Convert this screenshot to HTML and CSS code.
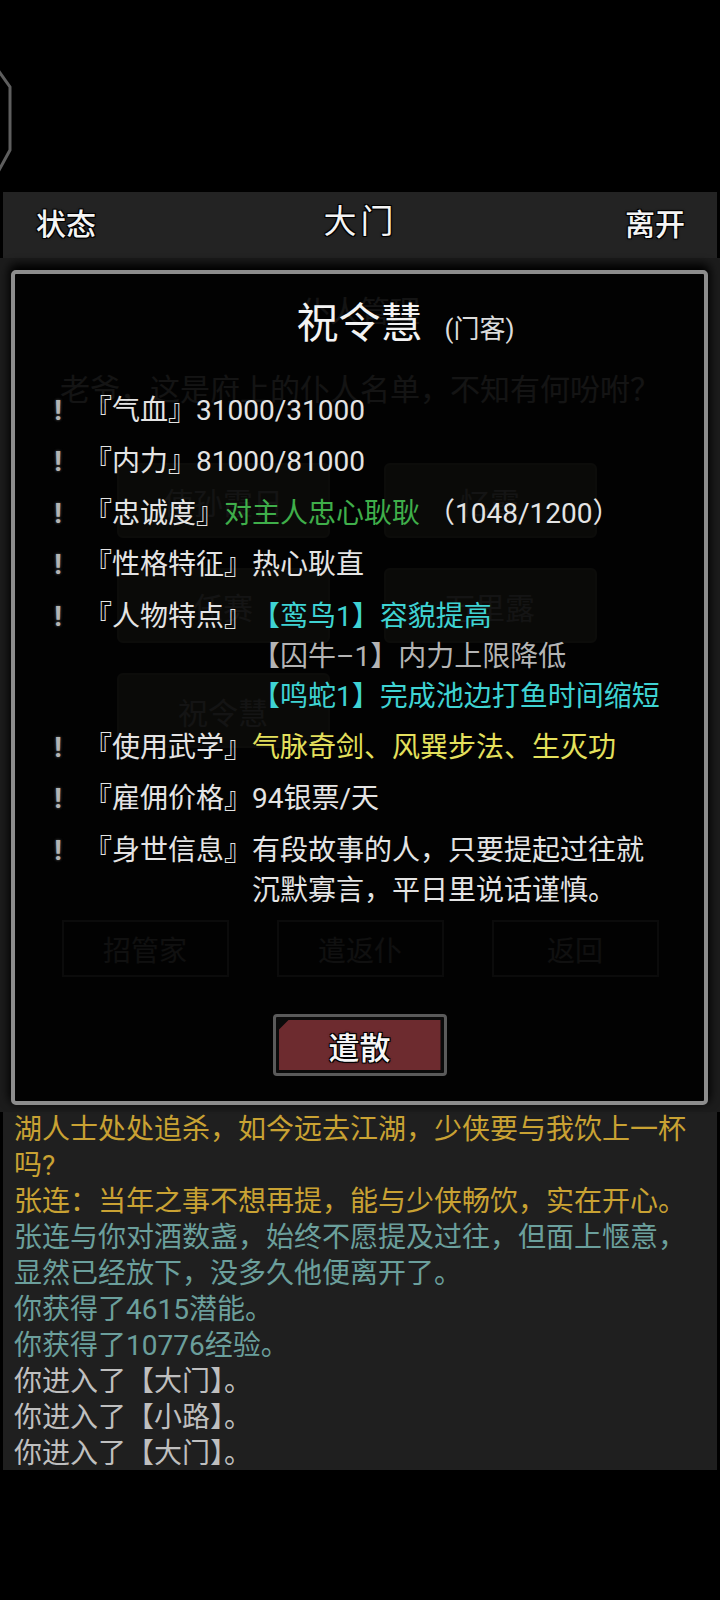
FILE: index.html
```html
<!DOCTYPE html>
<html lang="zh-CN">
<head>
<meta charset="utf-8">
<title>大门</title>
<link rel="stylesheet" href="styles.css">
</head>
<body>
<div class="page">
  <div class="top">
    <svg class="edge-hex" width="14" height="106" viewBox="0 0 14 106"><path d="M-2 2 L10 19 L10 82 L-2 104" fill="none" stroke="#5e5e5e" stroke-width="3"/></svg>
  </div>
  <header class="bar">
    <span class="bar-btn">状态</span>
    <span class="bar-title">大门</span>
    <span class="bar-btn">离开</span>
  </header>
  <main class="scene">
    <div class="scene-title">仆人管理</div>
    <div class="scene-intro">老爷，这是府上的仆人名单，不知有何吩咐？</div>
    <div class="servant-grid">
      <div class="servant">使孙霞日</div>
      <div class="servant">忆霞</div>
      <div class="servant">任赛</div>
      <div class="servant">万里露</div>
      <div class="servant">祝令慧</div>
    </div>
    <div class="scene-actions">
      <div class="scene-act">招管家</div>
      <div class="scene-act">遣返仆</div>
      <div class="scene-act">返回</div>
    </div>

    <section class="dialog">
      <div class="dlg-title">
        <span class="dlg-name">祝令慧</span>
        <span class="dlg-role">(门客)</span>
      </div>
      <div class="rows">
        <div class="row"><span class="mark">!</span><span class="label">『气血』</span><span class="val">31000/31000</span></div>
        <div class="row"><span class="mark">!</span><span class="label">『内力』</span><span class="val">81000/81000</span></div>
        <div class="row"><span class="mark">!</span><span class="label">『忠诚度』</span><span class="val"><span class="green">对主人忠心耿耿</span> （1048/1200）</span></div>
        <div class="row"><span class="mark">!</span><span class="label">『性格特征』</span><span class="val">热心耿直</span></div>
        <div class="row"><span class="mark">!</span><span class="label">『人物特点』</span><span class="val"><span class="line cyan">【鸾鸟1】容貌提高</span><span class="line grey">【囚牛–1】内力上限降低</span><span class="line cyan">【鸣蛇1】完成池边打鱼时间缩短</span></span></div>
        <div class="row"><span class="mark">!</span><span class="label">『使用武学』</span><span class="val yellow">气脉奇剑、风巽步法、生灭功</span></div>
        <div class="row"><span class="mark">!</span><span class="label">『雇佣价格』</span><span class="val">94银票/天</span></div>
        <div class="row"><span class="mark">!</span><span class="label">『身世信息』</span><span class="val">有段故事的人，只要提起过往就沉默寡言，平日里说话谨慎。</span></div>
      </div>
      <div class="dismiss"><div class="dismiss-face">遣散</div></div>
    </section>
  </main>
  <section class="log">
    <p class="gold">湖人士处处追杀，如今远去江湖，少侠要与我饮上一杯吗?</p>
    <p class="gold">张连：当年之事不想再提，能与少侠畅饮，实在开心。</p>
    <p class="teal">张连与你对酒数盏，始终不愿提及过往，但面上惬意，显然已经放下，没多久他便离开了。</p>
    <p class="teal">你获得了4615潜能。</p>
    <p class="teal">你获得了10776经验。</p>
    <p class="plain">你进入了【大门】。</p>
    <p class="plain">你进入了【小路】。</p>
    <p class="plain">你进入了【大门】。</p>
  </section>
</div>
</body>
</html>
```

FILE: styles.css
```css
* { box-sizing: border-box; }
html, body {
  margin: 0;
  padding: 0;
  background: #000;
}
body {
  width: 720px;
  height: 1600px;
  font-family: Roboto, "Noto Sans CJK SC", "Noto Sans", sans-serif;
  color: #e2e2e2;
  overflow: hidden;
}
.page {
  display: flex;
  flex-direction: column;
  width: 720px;
  height: 1600px;
}
.top {
  height: 192px;
  padding-top: 68px;
}
.edge-hex { display: block; }

.bar {
  height: 66px;
  margin: 0 3px;
  background: #232323;
  display: flex;
  align-items: center;
  justify-content: space-between;
  padding: 0 32px 0 33px;
}
.bar-btn, .bar-title {
  font-size: 30px;
  line-height: 36px;
  color: #f4f4f4;
  text-shadow: 1px 1px 0 #000, -1px -1px 0 #000, 1px -1px 0 #000, -1px 1px 0 #000, 0 0 3px #000;
}
.bar-btn { font-weight: 500; }
.bar-title {
  font-size: 33px;
  font-weight: 400;
  letter-spacing: 4px;
  margin-top: -6px;
}

.scene {
  position: relative;
  height: 854px;
  background: #1c1c1c;
  display: flex;
  flex-direction: column;
  align-items: center;
}
.scene-title {
  margin-top: 36px;
  font-size: 30px;
  line-height: 36px;
  color: #c8c8c8;
}
.scene-intro {
  margin-top: 42px;
  font-size: 30px;
  line-height: 36px;
  color: #c8c8c8;
}
.servant-grid {
  margin-top: 55px;
  display: grid;
  grid-template-columns: 213px 213px;
  column-gap: 54px;
  row-gap: 30px;
  margin-left: -7px;
}
.servant {
  height: 75px;
  background: #6a6a50;
  border: 2px solid #7a7a6a;
  border-radius: 6px;
  display: flex;
  align-items: center;
  justify-content: center;
  font-size: 30px;
  color: #c8c8c8;
}
.scene-actions {
  margin-top: 172px;
  display: flex;
  gap: 48px;
}
.scene-act {
  width: 167px;
  height: 57px;
  border: 2px solid #707070;
  display: flex;
  align-items: center;
  justify-content: center;
  font-size: 28px;
  color: #a0a0a0;
}

.dialog {
  position: absolute;
  left: 11px;
  top: 12px;
  width: 697px;
  height: 835px;
  border: 4px solid #8d8d8d;
  border-radius: 5px;
  background: rgba(0, 0, 0, 0.9);
  box-shadow: 0 -4px 10px 2px #000;
  display: flex;
  flex-direction: column;
  padding: 25px 0;
}
.dlg-title {
  display: grid;
  grid-template-columns: 1fr auto 1fr;
  align-items: baseline;
  line-height: 50px;
}
.dlg-name {
  grid-column: 2;
  font-size: 42px;
  color: #f3f3f3;
}
.dlg-role {
  grid-column: 3;
  margin-left: 22px;
  font-size: 26px;
  color: #dcdcdc;
}
.rows {
  margin-top: 37px;
  padding: 0 39px 0 30px;
  display: flex;
  flex-direction: column;
  gap: 11.4px;
  font-size: 28px;
  line-height: 40px;
}
.row {
  display: flex;
  align-items: flex-start;
}
.mark {
  width: 26px;
  flex: none;
  text-align: center;
  font-weight: 700;
  color: #b4b4b4;
  text-shadow: 0 0 3px #666;
}
.label {
  margin-left: 13px;
  flex: none;
  white-space: nowrap;
  color: #e4e4e4;
}
.val {
  flex: 1;
  color: #e4e4e4;
}
.line { display: block; }
.green { color: #3fae4a; }
.cyan { color: #3fd3d3; }
.grey { color: #b4b4b4; }
.yellow { color: #e4e05c; }

.dismiss {
  margin-top: auto;
  align-self: center;
  width: 174px;
  height: 62px;
  border: 3px solid #5a5a5a;
  border-radius: 4px;
  background: #0b0b0b;
  padding: 3px;
}
.dismiss-face {
  height: 100%;
  background: #6d2b2f;
  clip-path: polygon(10px 0, 100% 0, 100% 100%, 0 100%, 0 10px);
  display: flex;
  align-items: center;
  justify-content: center;
  font-size: 31px;
  font-weight: 500;
  color: #f6f6f6;
  text-shadow: 1px 1px 0 #000, -1px -1px 0 #000, 1px -1px 0 #000, -1px 1px 0 #000, 0 0 3px #000;
}

.log {
  margin: 0 3px;
  height: 358px;
  background: #1f1f1f;
  padding: 0 11px;
  font-size: 28px;
  line-height: 36px;
}
.log p { margin: 0; }
.gold { color: #c9a233; }
.teal { color: #6b9f9c; }
.plain { color: #bfbfbf; }
```
